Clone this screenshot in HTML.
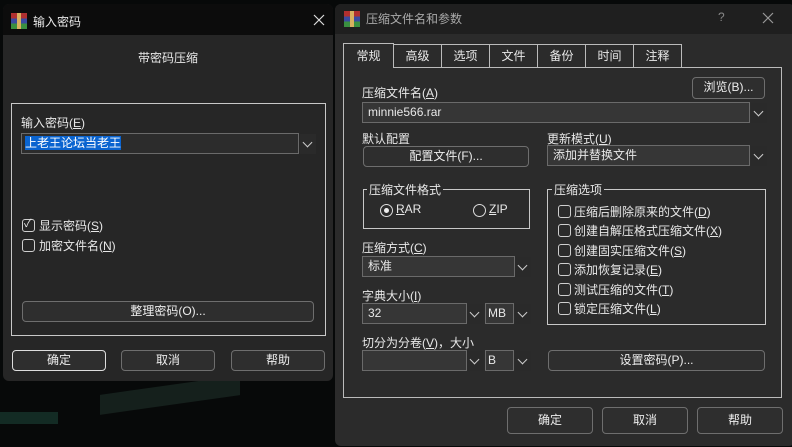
<!DOCTYPE html>
<html><head><meta charset="utf-8"><style>
*{box-sizing:border-box;margin:0;padding:0}
body{width:792px;height:447px;overflow:hidden;background:#070909;font-family:"Liberation Sans","Noto Sans CJK SC",sans-serif;font-size:12px;color:#e8e8e8;position:relative}
.a{position:absolute}
.btn{position:absolute;border:1px solid #6e6e6e;border-radius:4px;background:#2e2e2e;text-align:center;line-height:18px;color:#eee}
.inp{position:absolute;border:1px solid #6a6a6a;background:#363636;line-height:18px;padding-left:5px}
.arr{position:absolute;width:16px;height:20px;background:#2a2a2a}
.arr:after{content:"";position:absolute;left:4px;top:5px;width:6px;height:6px;border-right:1px solid #ccc;border-bottom:1px solid #ccc;transform:rotate(45deg)}
.grp{position:absolute;border:1px solid #c8c8c8}
.cb{position:absolute;width:13px;height:13px;border:1px solid #cfcfcf;border-radius:3px}
.logo{position:absolute;width:16px;height:16px;background:linear-gradient(#b03030 0 33%,#3a4aa0 33% 66%,#3a9040 66%)}
.logo:after{content:"";position:absolute;left:6px;top:0;width:4px;height:16px;background:#d8b060}
.tab{position:absolute;top:44px;height:23px;border:1px solid #bbb;border-bottom:none;text-align:center;line-height:22px;width:49px}
</style></head><body>
<div class="a" style="left:0;top:412px;width:58px;height:12px;background:#183a30;opacity:.7"></div>
<div class="a" style="left:100px;top:385px;width:140px;height:20px;background:#15201c;transform:skewY(-8deg)"></div>
<!-- left dialog -->
<div class="a" style="left:3px;top:4px;width:330px;height:377px;background:#262626;border-radius:6px;overflow:hidden">
 <div class="a" style="left:0;top:0;width:330px;height:31px;background:#0c0c0c"></div>
 <div class="logo" style="left:8px;top:9px"></div>
 <div class="a" style="left:30px;top:9px">输入密码</div>
 <svg class="a" style="left:310px;top:10px" width="12" height="12"><path d="M1 1L11 11M11 1L1 11" stroke="#ddd" stroke-width="1.2"/></svg>
 <div class="a" style="left:0;top:45px;width:330px;text-align:center">带密码压缩</div>
</div>
<div class="grp" style="left:11px;top:103px;width:315px;height:233px"></div>
<div class="a" style="left:21px;top:114px">输入密码(<u>E</u>)</div>
<div class="inp" style="left:21px;top:133px;width:278px;height:21px;padding-left:3px;background:#2c2c2c"><span style="background:#0a64d0;color:#fff">上老王论坛当老王</span></div>
<div class="arr" style="left:300px;top:134px"></div>
<div class="cb" style="left:22px;top:219px"></div><div class="a" style="left:24px;top:215px;font-size:11px">✓</div>
<div class="a" style="left:39px;top:217px">显示密码(<u>S</u>)</div>
<div class="cb" style="left:22px;top:239px"></div>
<div class="a" style="left:39px;top:237px">加密文件名(<u>N</u>)</div>
<div class="btn" style="left:22px;top:301px;width:292px;height:21px">整理密码(O)...</div>
<div class="btn" style="left:12px;top:350px;width:94px;height:21px;border-color:#ddd">确定</div>
<div class="btn" style="left:121px;top:350px;width:94px;height:21px">取消</div>
<div class="btn" style="left:231px;top:350px;width:94px;height:21px">帮助</div>
<!-- right dialog -->
<div class="a" style="left:335px;top:4px;width:460px;height:442px;background:#2b2b2b;border-radius:6px;overflow:hidden">
 <div class="a" style="left:0;top:0;width:460px;height:30px;background:#1f1f1f"></div>
 <div class="logo" style="left:9px;top:7px"></div>
 <div class="a" style="left:31px;top:6px;color:#aaa">压缩文件名和参数</div>
 <div class="a" style="left:383px;top:6px;color:#888">?</div>
 <svg class="a" style="left:427px;top:8px" width="12" height="12"><path d="M1 1L11 11M11 1L1 11" stroke="#999" stroke-width="1.2"/></svg>
</div>
<div class="a" style="left:343px;top:67px;width:439px;height:331px;border:1px solid #bbb"></div>
<div class="tab" style="left:343px;top:43px;height:25px;width:51px;background:#2b2b2b;line-height:24px">常规</div>
<div class="tab" style="left:393px">高级</div>
<div class="tab" style="left:441px">选项</div>
<div class="tab" style="left:489px">文件</div>
<div class="tab" style="left:537px">备份</div>
<div class="tab" style="left:585px">时间</div>
<div class="tab" style="left:633px">注释</div>
<div class="a" style="left:362px;top:84px">压缩文件名(<u>A</u>)</div>
<div class="btn" style="left:692px;top:77px;width:73px;height:22px">浏览(B)...</div>
<div class="inp" style="left:362px;top:102px;width:388px;height:21px">minnie566.rar</div>
<div class="arr" style="left:751px;top:103px"></div>
<div class="a" style="left:362px;top:130px">默认配置</div>
<div class="a" style="left:547px;top:130px">更新模式(<u>U</u>)</div>
<div class="btn" style="left:363px;top:146px;width:166px;height:21px">配置文件(F)...</div>
<div class="inp" style="left:547px;top:145px;width:203px;height:21px">添加并替换文件</div>
<div class="arr" style="left:751px;top:146px"></div>
<div class="grp" style="left:363px;top:189px;width:167px;height:40px"></div>
<div class="a" style="left:367px;top:181px;background:#2b2b2b;padding:0 2px">压缩文件格式</div>
<div class="a" style="left:380px;top:204px;width:13px;height:13px;border:1px solid #ddd;border-radius:50%"><div class="a" style="left:3px;top:3px;width:5px;height:5px;background:#eee;border-radius:50%"></div></div>
<div class="a" style="left:396px;top:202px"><u>R</u>AR</div>
<div class="a" style="left:473px;top:204px;width:13px;height:13px;border:1px solid #ddd;border-radius:50%"></div>
<div class="a" style="left:489px;top:202px"><u>Z</u>IP</div>
<div class="grp" style="left:547px;top:189px;width:219px;height:136px"></div>
<div class="a" style="left:552px;top:181px;background:#2b2b2b;padding:0 2px">压缩选项</div>
<div class="cb" style="left:558px;top:205px"></div><div class="a" style="left:574px;top:203px">压缩后删除原来的文件(<u>D</u>)</div>
<div class="cb" style="left:558px;top:224px"></div><div class="a" style="left:574px;top:222px">创建自解压格式压缩文件(<u>X</u>)</div>
<div class="cb" style="left:558px;top:244px"></div><div class="a" style="left:574px;top:242px">创建固实压缩文件(<u>S</u>)</div>
<div class="cb" style="left:558px;top:263px"></div><div class="a" style="left:574px;top:261px">添加恢复记录(<u>E</u>)</div>
<div class="cb" style="left:558px;top:283px"></div><div class="a" style="left:574px;top:281px">测试压缩的文件(<u>T</u>)</div>
<div class="cb" style="left:558px;top:302px"></div><div class="a" style="left:574px;top:300px">锁定压缩文件(<u>L</u>)</div>
<div class="a" style="left:362px;top:239px">压缩方式(<u>C</u>)</div>
<div class="inp" style="left:362px;top:256px;width:153px;height:21px">标准</div>
<div class="arr" style="left:515px;top:257px"></div>
<div class="a" style="left:362px;top:287px">字典大小(<u>I</u>)</div>
<div class="inp" style="left:362px;top:303px;width:105px;height:21px">32</div>
<div class="arr" style="left:467px;top:304px"></div>
<div class="inp" style="left:485px;top:303px;width:29px;height:21px;padding-left:2px">MB</div>
<div class="arr" style="left:515px;top:304px"></div>
<div class="a" style="left:362px;top:334px">切分为分卷(<u>V</u>)，大小</div>
<div class="inp" style="left:362px;top:350px;width:105px;height:21px"></div>
<div class="arr" style="left:467px;top:351px"></div>
<div class="inp" style="left:485px;top:350px;width:29px;height:21px;padding-left:2px">B</div>
<div class="arr" style="left:515px;top:351px"></div>
<div class="btn" style="left:548px;top:350px;width:217px;height:21px">设置密码(P)...</div>
<div class="btn" style="left:507px;top:407px;width:86px;height:27px;line-height:25px">确定</div>
<div class="btn" style="left:602px;top:407px;width:86px;height:27px;line-height:25px">取消</div>
<div class="btn" style="left:697px;top:407px;width:86px;height:27px;line-height:25px">帮助</div>
</body></html>
